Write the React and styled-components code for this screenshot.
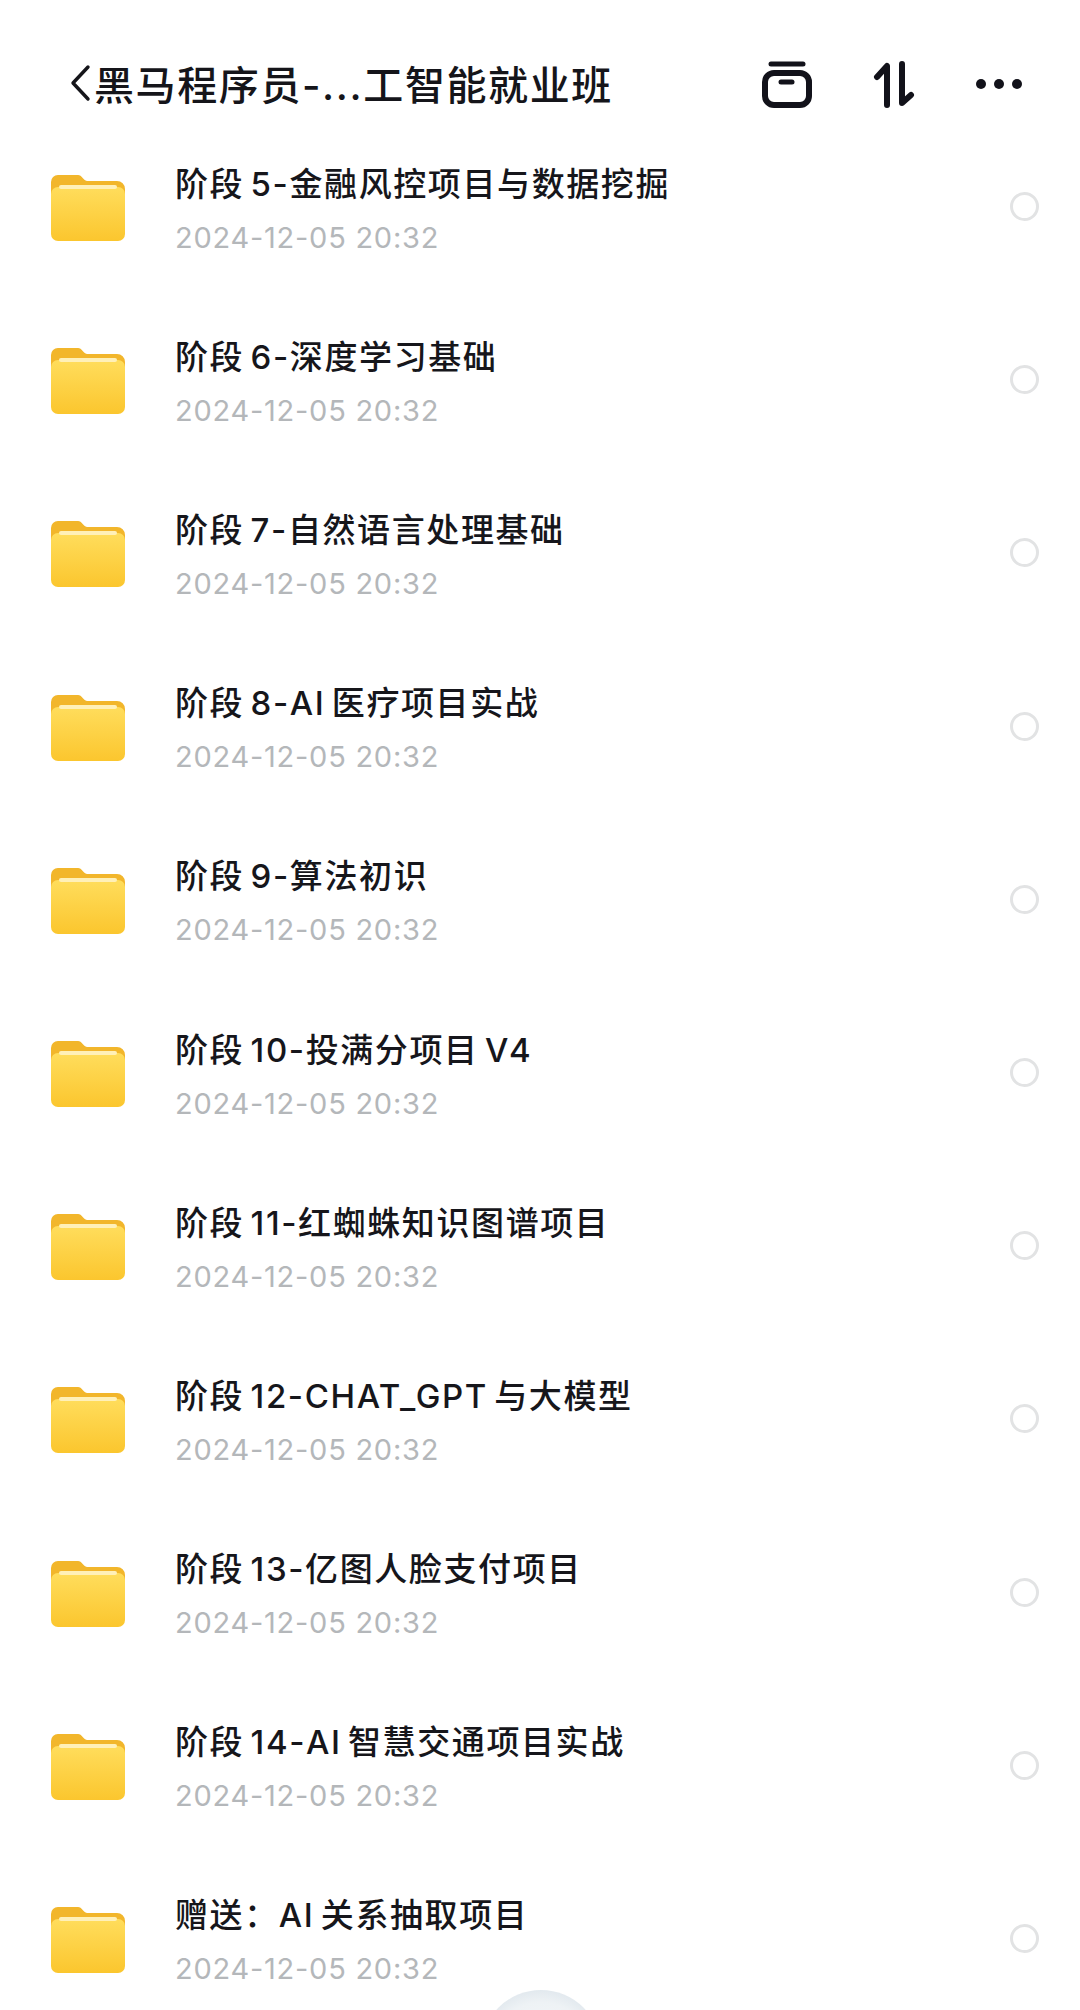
import React from 'react'
import styled, { createGlobalStyle } from 'styled-components'

const GlobalStyle = createGlobalStyle`
  html, body { margin: 0; padding: 0; background: #fff; }
  body { width: 1080px; height: 2010px; overflow: hidden; font-family: "Inter", "Noto Sans CJK SC", sans-serif; }
`

const Page = styled.div`
  position: relative;
  width: 1080px;
  height: 2010px;
  overflow: hidden;
  background: #fff;
`

const Header = styled.header`
  display: flex;
  align-items: center;
  height: 119px;
  padding: 47px 58px 0 68px;
  box-sizing: border-box;
`

const Title = styled.h1`
  flex: 1;
  margin: 0 0 0 2px;
  font-size: 40px;
  font-weight: 500;
  color: #15151a;
  letter-spacing: 1.6px;
  white-space: nowrap;
`

const Tools = styled.div`
  display: flex;
  align-items: center;
  gap: 61px;
  padding-top: 2px;
`

const List = styled.ul`
  list-style: none;
  margin: 0;
  padding: 1px 0 0;
`

const Row = styled.li`
  display: flex;
  align-items: center;
  height: 173.2px;
  padding: 0 41px 0 51px;
  box-sizing: border-box;
`

const FolderIcon = styled.svg`
  margin-top: 2px;
  flex: none;
`

const Texts = styled.div`
  flex: 1;
  margin-left: 50px;
  padding-top: 4px;
`

const Name = styled.div`
  font-size: 33px;
  line-height: 44px;
  font-weight: 500;
  color: #16161b;
  letter-spacing: 1.6px;
  word-spacing: -4px;
`

const Stamp = styled.div`
  margin-top: 14px;
  font-size: 29px;
  line-height: 36px;
  letter-spacing: 0.75px;
  color: #b4b7ba;
`

const Radio = styled.span`
  width: 29px;
  height: 29px;
  border: 3px solid #e2e3e4;
  border-radius: 50%;
  box-sizing: border-box;
`

const Bubble = styled.div`
  position: absolute;
  left: 481px;
  top: 1990px;
  width: 120px;
  height: 120px;
  border-radius: 50%;
  background: radial-gradient(circle at 50% 55%, #f8f9fb 0%, #eef2f5 60%, #ccd8e2 100%);
`

const Folder = () => (
  <FolderIcon width="74" height="67" viewBox="0 0 74 67">
    <defs>
      <linearGradient id="folderFront" x1="0" y1="0" x2="0" y2="1">
        <stop offset="0" stopColor="#ffdd5c" />
        <stop offset="1" stopColor="#fbc62e" />
      </linearGradient>
    </defs>
    <path d="M0 8a7 7 0 0 1 7-7h20c4 0 5 5 9 6h30a8 8 0 0 1 8 8v20H0z" fill="#f2b62b" />
    <rect x="0" y="13" width="74" height="54" rx="7" fill="url(#folderFront)" />
    <rect x="8" y="11" width="58" height="4" rx="2" fill="#fff0b8" />
  </FolderIcon>
)

const Back = () => (
  <svg width="24" height="40" viewBox="0 0 24 40" fill="none" stroke="#15151a" strokeWidth="3.4" strokeLinecap="round" strokeLinejoin="round">
    <path d="M20 4 5 20l15 16" />
  </svg>
)

const Box = () => (
  <svg width="50" height="47" viewBox="0 0 50 47" fill="none" stroke="#12121a" strokeLinecap="round">
    <path d="M9 3h32" strokeWidth="5" />
    <rect x="3" y="12" width="44" height="32" rx="9" strokeWidth="6" />
    <path d="M19 21h11" strokeWidth="5" />
  </svg>
)

const Sort = () => (
  <svg width="42" height="47" viewBox="0 0 42 47" fill="none" stroke="#12121a" strokeWidth="6" strokeLinecap="round" strokeLinejoin="round">
    <path d="M4 16 14 5v39" />
    <path d="M29 3v39l9-8" />
  </svg>
)

const More = () => (
  <svg width="46" height="10" viewBox="0 0 46 10" fill="#12121a">
    <circle cx="5" cy="5" r="5" />
    <circle cx="23" cy="5" r="5" />
    <circle cx="41" cy="5" r="5" />
  </svg>
)

const names = [
  '阶段 5-金融风控项目与数据挖掘',
  '阶段 6-深度学习基础',
  '阶段 7-自然语言处理基础',
  '阶段 8-AI 医疗项目实战',
  '阶段 9-算法初识',
  '阶段 10-投满分项目 V4',
  '阶段 11-红蜘蛛知识图谱项目',
  '阶段 12-CHAT_GPT 与大模型',
  '阶段 13-亿图人脸支付项目',
  '阶段 14-AI 智慧交通项目实战',
  '赠送：AI 关系抽取项目',
]

export default function App() {
  return (
    <Page>
      <GlobalStyle />
      <Header>
        <Back />
        <Title>黑马程序员-...工智能就业班</Title>
        <Tools>
          <Box />
          <Sort />
          <More />
        </Tools>
      </Header>
      <List>
        {names.map(name => (
          <Row key={name}>
            <Folder />
            <Texts>
              <Name>{name}</Name>
              <Stamp>2024-12-05 20:32</Stamp>
            </Texts>
            <Radio />
          </Row>
        ))}
      </List>
      <Bubble />
    </Page>
  )
}
